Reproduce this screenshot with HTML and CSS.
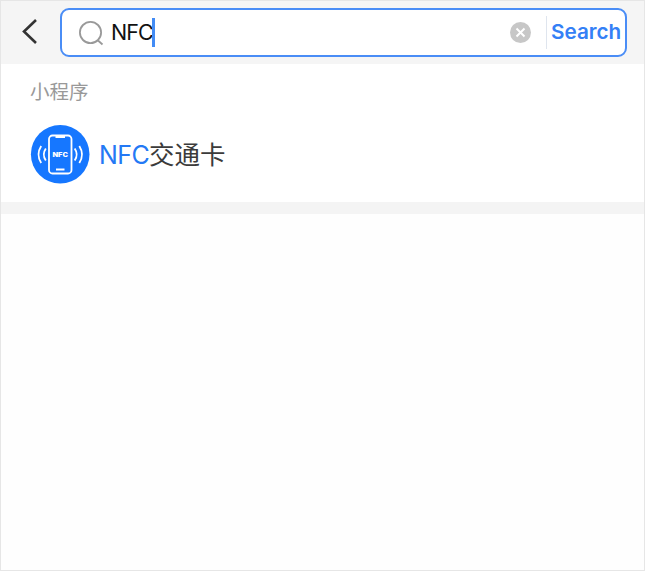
FILE: index.html
```html
<!DOCTYPE html>
<html lang="zh-CN">
<head>
<meta charset="utf-8">
<title>NFC</title>
<link rel="stylesheet" href="styles.css">
</head>
<body>
<main class="screen">
  <header class="topbar">
    <svg class="back" width="18" height="28" viewBox="0 0 18 28"><path d="M15 3 3 14.500 15 26"/></svg>
    <div class="searchbox">
      <svg class="lens" width="26" height="28" viewBox="0 0 26 28"><circle cx="11.500" cy="13.500" r="10.600"/><path d="m19 21.500 4.500 4"/></svg>
      <span class="query">NFC</span><span class="caret"></span>
      <svg class="clear" width="21" height="21" viewBox="0 0 21 21"><circle cx="10.500" cy="10.500" r="10.500"/><path d="m6.500 6.500 8 8m0-8-8 8"/></svg>
      <span class="divider"></span>
      <span class="submit">Search</span>
    </div>
  </header>
  <section class="results">
    <h2 class="heading">小程序</h2>
    <div class="item">
      <svg class="logo" width="60" height="59" viewBox="0 0 60 59">
        <circle class="disc" cx="30.200" cy="29.300" r="29.300"/>
        <rect x="19" y="10.500" width="22.500" height="38" rx="3.500"/>
        <path class="notch" d="M25.500 11.500h9.500"/>
        <path class="home" d="M26 44.500h8.500"/>
        <path d="M15.800 23.500q-4 6 0 12M11.200 21q-5.400 8.500 0 17M44.700 23.500q4 6 0 12M49.300 21q5.400 8.500 0 17"/>
        <text x="30.200" y="31.500" textLength="15.500" lengthAdjust="spacingAndGlyphs">NFC</text>
      </svg>
      <span class="name"><span class="match">NFC</span><span class="rest">交通卡</span></span>
    </div>
  </section>
</main>
</body>
</html>
```

FILE: styles.css
```css
* { box-sizing: border-box; }
body { margin: 0; background: #fff; font-family: Inter, "Noto Sans CJK SC", sans-serif; }
.screen { height: 571px; overflow: hidden; border: 1px solid #e6e6e6; background: #fefefe; }
.topbar { height: 63px; padding: 7px 17px 0 20px; display: flex; background: #f5f5f5; }
svg { flex: none; fill: none; }
.back { margin-top: 9px; stroke: #333; stroke-width: 2.6; }
.searchbox { height: 49px; flex: 1; margin-left: 21px; display: flex; align-items: center; border: 2px solid #4a8df6; border-radius: 9px; background: #fff; padding: 0 5px 0 17px; }
.lens { stroke: #999; stroke-width: 1.8; }
.query { width: 41px; margin: -1px 0 0 6px; font-size: 21.500px; line-height: 30px; letter-spacing: -1px; color: #111; }
.caret { width: 3px; height: 29px; background: #438cf5; }
.clear { margin-left: auto; fill: #c7c7c7; }
.clear path { stroke: #fff; stroke-width: 2; }
.divider { width: 1px; height: 33px; margin: 0 4px 0 15px; background: #dfe5ee; }
.submit { width: 69px; margin-top: -1px; font-size: 20.700px; font-weight: 600; line-height: 30px; color: #3480f6; white-space: nowrap; }
.results { height: 150px; padding: 14px 29px 0; border-bottom: 12px solid #f4f4f4; background: #fff; }
.heading { margin: 0; font-size: 19.500px; line-height: 28px; font-weight: 400; color: #999; }
.item { display: flex; align-items: center; margin-top: 19px; }
.logo { stroke: #fff; stroke-width: 1.8; }
.disc { fill: #1677ff; stroke: none; }
.notch { stroke-width: 3; }
.home { stroke-width: 2; }
.logo text { fill: #fff; stroke: none; font: 900 6px Inter, sans-serif; text-anchor: middle; }
.name { display: flex; align-items: center; margin-left: 9px; line-height: 36px; color: #3b3b3b; }
.match { font-size: 25px; letter-spacing: -.6px; color: #2479f5; }
.rest { font-size: 25.500px; }
```
